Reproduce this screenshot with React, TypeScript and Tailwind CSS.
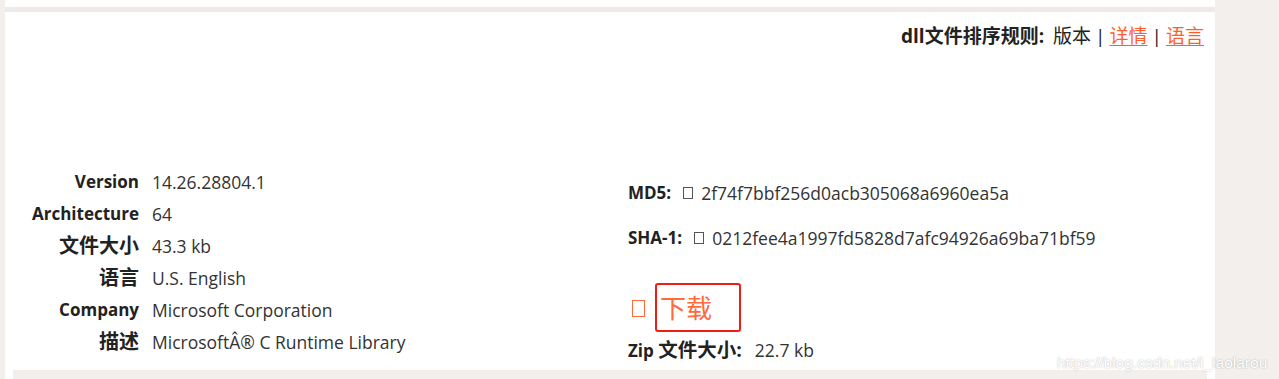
const sans = "font-['Open_Sans','Noto_Sans_CJK_SC',sans-serif]"

const details = [
  { label: 'Version', value: '14.26.28804.1', cjk: false },
  { label: 'Architecture', value: '64', cjk: false },
  { label: '文件大小', value: '43.3 kb', cjk: true },
  { label: '语言', value: 'U.S. English', cjk: true },
  { label: 'Company', value: 'Microsoft Corporation', cjk: false },
  { label: '描述', value: 'MicrosoftÂ® C Runtime Library', cjk: true },
]

function Tofu({ className }: { className: string }) {
  return <span className={`inline-block border ${className}`} aria-hidden="true" />
}

export default function App() {
  return (
    <div className={`relative flex h-[379px] w-[1279px] overflow-hidden bg-[#f2efed] pl-[5px] ${sans}`}>
      <div className="flex w-[1210px] flex-col">
        <div className="h-[7px] bg-white" />
        <div className="h-[5px] bg-[#efeae7]" />
        <div className="relative flex h-[358px] flex-col bg-white">
          <div className="flex justify-end pr-[11px] pt-[12px] text-[19px] leading-[24px] text-[#222]">
            <span className="font-bold">dll文件排序规则:</span>
            <span className="ml-[9px]">版本</span>
            <span className="mx-[4px]">|</span>
            <a className="text-[#ff5e2a] underline underline-offset-2">详情</a>
            <span className="mx-[4px]">|</span>
            <a className="text-[#ff5e2a] underline underline-offset-2">语言</a>
          </div>

          <div className="mt-[118px] flex">
            <div className="grid w-[623px] grid-cols-[134px_1fr] gap-x-[13px] self-start">
              {details.map((d) => (
                <div key={d.label} className="col-span-2 grid h-[32px] grid-cols-subgrid items-center">
                  <span
                    className={`text-right font-bold text-[#222] ${d.cjk ? 'text-[20px]' : 'text-[17px]'}`}
                  >
                    {d.label}
                  </span>
                  <span className="text-[17.5px] text-[#333]">{d.value}</span>
                </div>
              ))}
            </div>

            <div className="flex flex-col pt-[15px] text-[17.5px] text-[#333]">
              <div className="flex h-[24px] items-center">
                <span className="text-[17px] font-bold text-[#222]">MD5:</span>
                <Tofu className="ml-[12px] mr-[8px] h-[12px] w-[10px] border-[#555]" />
                <span>2f74f7bbf256d0acb305068a6960ea5a</span>
              </div>
              <div className="mt-[21px] flex h-[24px] items-center">
                <span className="text-[17px] font-bold text-[#222]">SHA-1:</span>
                <Tofu className="ml-[12px] mr-[8px] h-[12px] w-[10px] border-[#555]" />
                <span>0212fee4a1997fd5828d7afc94926a69ba71bf59</span>
              </div>
              <div className="mt-[33px] flex h-[50px] items-center">
                <Tofu className="ml-[4px] mr-[15px] h-[17px] w-[13px] border-[#ff6a3a]" />
                <span className="relative text-[26px] leading-[30px] text-[#ff6a3a]">
                  <span className="absolute left-[-5px] top-[-10px] h-[49px] w-[86px] rounded-[3px] border-[2px] border-[#f21d12]" />
                  下载
                </span>
              </div>
              <div className="mt-[5px] flex h-[24px] items-center">
                <span className="text-[17px] font-bold text-[#222]">
                  Zip <span className="text-[19.5px]">文件大小:</span>
                </span>
                <span className="ml-[13px]">22.7 kb</span>
              </div>
            </div>
          </div>
        </div>
        <div className="flex h-[9px] bg-white">
          <div className="ml-[8px] w-[1194px] bg-[#f2efed]" />
        </div>
      </div>
      <span className="absolute left-[1057px] top-[351px] whitespace-nowrap font-['Liberation_Sans',sans-serif] text-[15.5px] text-white [text-shadow:0_0_1.5px_rgba(0,0,0,0.35)]">
        https://blog.csdn.net/i_laolarou
      </span>
    </div>
  )
}
